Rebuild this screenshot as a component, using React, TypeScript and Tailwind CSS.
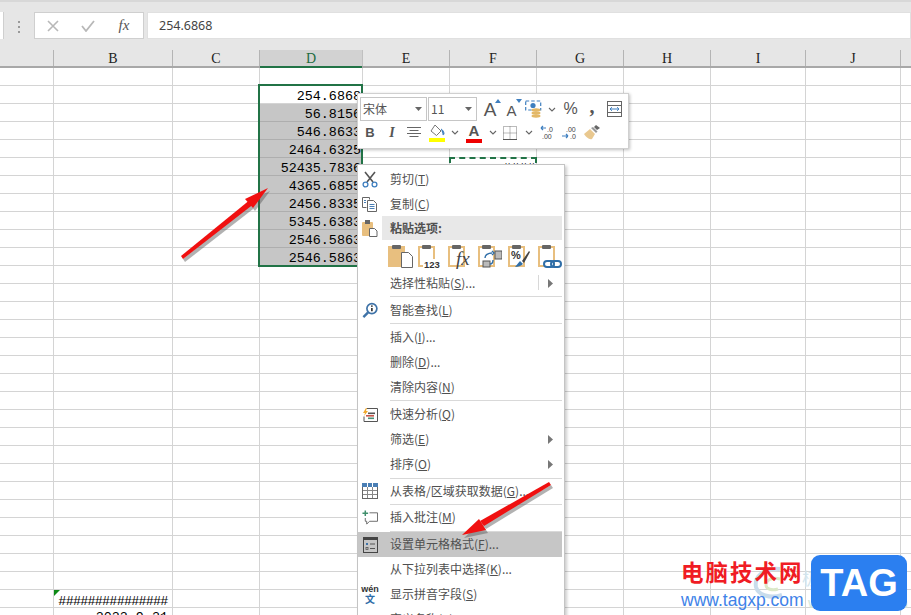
import React from "react";

const CJK = '"Noto Sans CJK SC","Noto Sans",sans-serif';
const colWidths = [54, 119, 87, 103, 87, 87, 87, 87, 95, 95, 20];
const colNames = ["", "B", "C", "D", "E", "F", "G", "H", "I", "J", ""];
const colClass = ["w-[54px]", "w-[119px]", "w-[87px]", "w-[103px]", "w-[87px]", "w-[87px]", "w-[87px]", "w-[87px]", "w-[95px]", "w-[95px]", "w-[20px]"];

const values: Record<number, string> = {
  1: "254.6868", 2: "56.8156", 3: "546.8633", 4: "2464.6325", 5: "52435.7836",
  6: "4365.6855", 7: "2456.8335", 8: "5345.6383", 9: "2546.5863", 10: "2546.5863",
};

function Cell({ col, row }: { col: number; row: number }) {
  const selected = col === 3 && row >= 2 && row <= 10;
  const base = `${colClass[col]} shrink-0 h-[18px] border-r border-b relative font-['Liberation_Mono'] text-[13.4px] text-black overflow-visible whitespace-nowrap`;
  const tone = selected ? "bg-[#c6c6c6] border-[#aeaeae]" : "border-[#d4d4d4]";
  let text: string | null = null;
  let align = "text-right pr-[1px] leading-[21px]";
  if (col === 3 && values[row]) text = values[row];
  if (col === 5 && row === 5) text = "####";
  if (col === 1 && row === 29) { text = "###############"; align = "text-center tracking-[-0.75px] leading-[23px]"; }
  if (col === 1 && row === 30) { text = "2022-9-21"; align = "text-right pr-[4px] leading-[20px]"; }
  return (
    <div className={`${base} ${tone} ${align}`}>
      {text}
      {col === 1 && row === 29 && (
        <div className="absolute left-0 top-0 w-0 h-0 border-t-[6px] border-r-[6px] border-t-[#0e8a16] border-r-transparent" />
      )}
    </div>
  );
}

function Chevron({ color = "#666" }: { color?: string }) {
  return (
    <svg width="8" height="5" viewBox="0 0 8 5"><path d="M1 1l3 3 3-3" fill="none" stroke={color} strokeWidth="1.1" /></svg>
  );
}
function Caret() {
  return <svg width="7" height="4" viewBox="0 0 7 4"><path d="M0 0h7L3.5 4z" fill="#666" /></svg>;
}
function SubArrow() {
  return <svg width="5" height="9" viewBox="0 0 5 9"><path d="M0 0l5 4.5L0 9z" fill="#777" /></svg>;
}

function Scissors() {
  return (
    <svg width="16" height="17" viewBox="0 0 16 17" fill="none">
      <path d="M3 1l8 10M13 1L5 11" stroke="#555" strokeWidth="1.6" />
      <circle cx="3.5" cy="13.5" r="2.4" stroke="#3f7fbf" strokeWidth="1.3" />
      <circle cx="12.5" cy="13.5" r="2.4" stroke="#3f7fbf" strokeWidth="1.3" />
    </svg>
  );
}
function CopyIcon() {
  return (
    <svg width="16" height="15" viewBox="0 0 16 15" fill="none" stroke="#666">
      <path d="M.5.5h7v2M.5.5v10h4" />
      <path d="M5.5 3.5h6l3 3v8h-9z" fill="#fff" />
      <path d="M7.5 7.5h5M7.5 9.5h5M7.5 11.5h5M2 3.5h2M2 5.5h2" stroke="#4a7fb5" />
    </svg>
  );
}
function PasteMain() {
  return (
    <svg width="16" height="18" viewBox="0 0 16 18">
      <rect x="0" y="3" width="11" height="14" rx="1" fill="#e8bf7f" />
      <rect x="3" y="1" width="5" height="4" fill="#666" />
      <path d="M7.5 9.5h5l2.5 2.5v5.5H7.5z" fill="#fff" stroke="#666" />
    </svg>
  );
}
function InfoSearch() {
  return (
    <svg width="17" height="17" viewBox="0 0 17 17" fill="none">
      <circle cx="10.5" cy="6.5" r="5.3" stroke="#3f73a8" strokeWidth="1.8" />
      <path d="M6.5 10.5L1.5 15.5" stroke="#3f73a8" strokeWidth="2.6" />
      <path d="M10.5 5.8v3.4" stroke="#333" strokeWidth="1.8" />
      <circle cx="10.5" cy="3.8" r="1" fill="#333" />
    </svg>
  );
}
function QuickAnalysis() {
  return (
    <svg width="16" height="15" viewBox="0 0 16 15">
      <path d="M5 1.5h10.5v13H2v-5" fill="#fff" stroke="#555" />
      <path d="M4 1L1 6h2L2 9l4-5H4l1-3z" fill="#f0a92e" />
      <rect x="6" y="5.5" width="7" height="1.6" fill="#555" />
      <rect x="4" y="8" width="8" height="1.6" fill="#c9554a" />
      <rect x="6" y="10.5" width="6" height="1.6" fill="#4a8f78" />
    </svg>
  );
}
function TableIcon() {
  return (
    <svg width="16" height="16" viewBox="0 0 16 16" fill="none">
      <rect x=".5" y=".5" width="15" height="15" fill="#fff" stroke="#666" />
      <rect x="0" y="0" width="16" height="4" fill="#4a7fb5" />
      <path d="M5.5 4v11M10.5 4v11M1 7.5h14M1 11.5h14" stroke="#888" />
      <path d="M5.5 0v4M10.5 0v4" stroke="#fff" />
    </svg>
  );
}
function CommentAdd() {
  return (
    <svg width="17" height="16" viewBox="0 0 17 16" fill="none">
      <path d="M8 2.500h8.500v9H8l-3 3v-3H3.500V8" stroke="#666" />
      <path d="M3.500 0v6M.5 3h6" stroke="#3f8f6c" strokeWidth="1.6" />
    </svg>
  );
}
function FormatCells() {
  return (
    <svg width="15" height="16" viewBox="0 0 15 16" fill="none">
      <rect x=".5" y=".5" width="14" height="15" stroke="#444" />
      <rect x="0" y="0" width="15" height="3" fill="#444" />
      <path d="M3 6h2v2H3z" fill="#3f73a8" />
      <path d="M7 7h5M7 11.5h5" stroke="#555" />
      <rect x="3" y="10.5" width="2" height="2" stroke="#555" strokeWidth=".8" />
    </svg>
  );
}
function Wen() {
  return (
    <div className="flex flex-col items-center leading-none">
      <span className="font-['Liberation_Sans'] text-[9px] font-bold text-[#333] leading-[9px]">wén</span>
      <span className="text-[10px] text-[#2f6ea8] font-bold leading-[10px]" style={{ fontFamily: CJK }}>文</span>
    </div>
  );
}

function PasteBoard({ children, white }: { children?: React.ReactNode; white?: boolean }) {
  return (
    <div className="relative w-[22px] h-[24px] shrink-0">
      <svg width="22" height="24" viewBox="0 0 22 24" className="absolute left-0 top-0">
        <path d="M1 3h15v19H1z" fill={white ? "#fff" : "#e8bf7f"} stroke="#e8bf7f" strokeWidth="2" />
        <rect x="4" y="1" width="9" height="4" rx="1" fill="#666" />
      </svg>
      {children}
    </div>
  );
}

function PasteRow() {
  return (
    <div className="h-[31px] flex items-center pl-[30px] gap-[8px]">
      <PasteBoard>
        <svg width="12" height="16" viewBox="0 0 12 16" className="absolute right-[-3px] bottom-[0px]"><path d="M.5.5h7l4 4v11H.5z" fill="#fff" stroke="#666" /></svg>
      </PasteBoard>
      <PasteBoard white>
        <span className="absolute left-[5px] bottom-[-2px] bg-white font-['Liberation_Sans'] text-[9.5px] font-bold leading-[11px] text-[#333] px-[1px]">123</span>
      </PasteBoard>
      <PasteBoard white>
        <span className="absolute left-[8px] bottom-[-1px] font-['Liberation_Serif'] italic text-[19px] leading-[21px] text-[#444]">fx</span>
      </PasteBoard>
      <PasteBoard white>
        <svg width="22" height="18" viewBox="0 0 22 18" className="absolute left-[2px] top-[6px]">
          <rect x="15" y="1" width="7" height="8" fill="#bbb" stroke="#555" />
          <rect x="3" y="11" width="7" height="6" fill="#bbb" stroke="#555" />
          <path d="M5 8c0-3 3-5 7-5M12 1l2 2-2 2M13 10c0 2-1 4-3 4" fill="none" stroke="#2f6ea8" strokeWidth="1.4" />
        </svg>
      </PasteBoard>
      <PasteBoard white>
        <span className="absolute left-[3px] top-[6px] font-['Liberation_Sans'] font-bold text-[11px] leading-[11px] text-[#333]">%</span>
        <svg width="20" height="20" viewBox="0 0 20 20" className="absolute left-[4px] top-[5px]">
          <path d="M3 18l5-6 3 3c-2 2-5 3-8 3z" fill="#2f6ea8" />
          <path d="M10 12l7-10 1 1-6 11z" fill="#444" />
        </svg>
      </PasteBoard>
      <PasteBoard white>
        <svg width="20" height="10" viewBox="0 0 20 10" className="absolute left-[5px] bottom-[-1px]" fill="none" stroke="#2f6ea8" strokeWidth="2">
          <rect x="1" y="2" width="10" height="6" rx="3" fill="#fff" />
          <rect x="8" y="2" width="10" height="6" rx="3" />
        </svg>
      </PasteBoard>
    </div>
  );
}

type Item = { t?: string; k?: string; after?: string; icon?: React.ReactNode; sub?: boolean; h: number; hi?: boolean; split?: boolean };

function MenuRow({ t, k, after, icon, sub, h, hi, split }: Item) {
  const hClass = h === 24 ? "h-[24px]" : "h-[25px]";
  return (
    <div className={`${hClass} mr-[2px] flex items-center relative ${hi ? "bg-[#c6c6c6]" : ""}`}>
      <div className="w-[16px] ml-[4px] shrink-0 flex items-center justify-center">{icon}</div>
      <div className="pl-[12px] pb-[1px] text-[12px] leading-none text-[#505050] whitespace-nowrap" style={{ fontFamily: CJK }}>
        {t}(<span className="underline">{k}</span>){after}
      </div>
      {sub && <div className="absolute right-[9px] top-[8px]"><SubArrow /></div>}
      {split && <div className="absolute right-[23px] top-[4px] h-[15px] w-px bg-[#d8d8d8]" />}
    </div>
  );
}

function Sep({ h = 3 }: { h?: number }) {
  const c = h === 2 ? "h-[2px]" : "h-[3px]";
  return (
    <div className={`${c} flex items-center pl-[32px] pr-[2px]`}>
      <div className="w-full h-px bg-[#d9d9d9]" />
    </div>
  );
}

function ContextMenu() {
  return (
    <div className="absolute left-[357px] top-[164px] w-[208px] h-[470px] bg-white border border-[#c4c4c4] shadow-[2px_2px_3px_rgba(0,0,0,0.2)] pt-[2px]">
      <MenuRow t="剪切" k="T" icon={<Scissors />} h={25} />
      <MenuRow t="复制" k="C" icon={<CopyIcon />} h={24} />
      <div className="h-[24px] flex items-center relative">
        <div className="w-[24px] flex justify-center shrink-0"><PasteMain /></div>
        <div className="flex-1 h-full mr-[2px] bg-[#e8e8e8] flex items-center pl-[8px] pb-[1px] text-[12px] font-bold text-[#505050]" style={{ fontFamily: CJK }}>粘贴选项:</div>
      </div>
      <PasteRow />
      <MenuRow t="选择性粘贴" k="S" after="..." sub split h={24} />
      <Sep />
      <MenuRow t="智能查找" k="L" icon={<InfoSearch />} h={24} />
      <Sep />
      <MenuRow t="插入" k="I" after="..." h={25} />
      <MenuRow t="删除" k="D" after="..." h={25} />
      <MenuRow t="清除内容" k="N" h={24} />
      <Sep />
      <MenuRow t="快速分析" k="Q" icon={<QuickAnalysis />} h={25} />
      <MenuRow t="筛选" k="E" sub h={25} />
      <MenuRow t="排序" k="O" sub h={25} />
      <Sep h={2} />
      <MenuRow t="从表格/区域获取数据" k="G" after="..." icon={<TableIcon />} h={24} />
      <Sep h={2} />
      <MenuRow t="插入批注" k="M" icon={<CommentAdd />} h={25} />
      <Sep h={2} />
      <MenuRow t="设置单元格格式" k="F" after="..." icon={<FormatCells />} h={25} hi />
      <MenuRow t="从下拉列表中选择" k="K" after="..." h={25} />
      <MenuRow t="显示拼音字段" k="S" icon={<Wen />} h={25} />
      <MenuRow t="定义名称" k="A" after="..." h={25} />
    </div>
  );
}

function Combo({ text, w }: { text: string; w: string }) {
  return (
    <div className={`${w} h-[24px] border border-[#c6c6c6] flex items-center justify-between pl-[2px] pr-[4px] mr-px`}>
      <span className="text-[12px] text-[#555]" style={{ fontFamily: CJK }}>{text}</span>
      <Caret />
    </div>
  );
}

function MiniToolbar() {
  return (
    <div className="absolute left-[357px] top-[93px] w-[272px] h-[56px] bg-white border border-[#d0d0d0] shadow-[1px_1px_3px_rgba(0,0,0,0.25)] pl-[2px] pt-[3px]">
      <div className="flex items-center h-[24px]">
        <Combo text="宋体" w="w-[67px]" />
        <Combo text="11" w="w-[49px]" />
        <div className="w-[22px] ml-px relative flex justify-center items-end h-[20px]">
          <span className="font-['Liberation_Sans'] text-[19px] leading-[19px] text-[#555]">A</span>
          <svg width="6" height="4" viewBox="0 0 6 4" className="absolute right-[0px] top-[0px]"><path d="M0 4l3-4 3 4z" fill="#3f7fbf" /></svg>
        </div>
        <div className="w-[21px] relative flex justify-center items-end h-[20px]">
          <span className="font-['Liberation_Sans'] text-[15px] leading-[17px] text-[#555]">A</span>
          <svg width="6" height="4" viewBox="0 0 6 4" className="absolute right-[0px] top-[0px]"><path d="M0 0l3 4 3-4z" fill="#3f7fbf" /></svg>
        </div>
        <div className="w-[22px] flex justify-center">
          <svg width="17" height="18" viewBox="0 0 17 18">
            <path d="M.7 1h15v9H.7z" fill="#fff" stroke="#3f7fbf" strokeWidth="1.2" strokeDasharray="3.5 2" />
            <circle cx="8" cy="5.500" r="2.600" fill="#3f7fbf" />
            <ellipse cx="11" cy="10" rx="4.500" ry="1.700" fill="#e3b867" />
            <ellipse cx="11" cy="13" rx="4.500" ry="1.700" fill="#e3b867" />
            <ellipse cx="11" cy="16" rx="4.500" ry="1.700" fill="#e3b867" />
          </svg>
        </div>
        <div className="w-[15px] flex justify-center"><Chevron /></div>
        <div className="w-[23px] text-center font-['Liberation_Sans'] text-[16px] text-[#555] leading-none">%</div>
        <div className="w-[20px] text-center font-['Liberation_Serif'] font-bold text-[20px] text-[#555] leading-[14px] pb-[6px]">,</div>
        <div className="w-[25px] flex justify-center">
          <svg width="15" height="16" viewBox="0 0 15 16" fill="none">
            <rect x=".5" y=".5" width="14" height="15" stroke="#666" />
            <path d="M0 4.500h15M0 11.500h15" stroke="#666" />
            <path d="M3 8h9M3 8l2-1.800M3 8l2 1.800M12 8l-2-1.800M12 8l-2 1.800" stroke="#3f7fbf" />
          </svg>
        </div>
      </div>
      <div className="flex items-center h-[23px] -ml-px">
        <div className="w-[22px] text-center font-['Liberation_Sans'] font-bold text-[13px] text-[#555]">B</div>
        <div className="w-[22px] text-center font-['Liberation_Serif'] font-bold italic text-[14px] text-[#555]">I</div>
        <div className="w-[22px] flex justify-center">
          <svg width="14" height="11" viewBox="0 0 14 11"><path d="M0 .5h14M2.500 3.500h9M0 6.500h14M2.500 9.500h9" stroke="#666" /></svg>
        </div>
        <div className="w-[23px] flex justify-center">
          <svg width="16" height="18" viewBox="0 0 16 18">
            <path d="M6 1l6 6-4.500 4.500L2 7z" fill="#fff" stroke="#777" />
            <path d="M12 5c2 1 3 3 3 5 0 .8-1.400.8-1.400 0" fill="#3f7fbf" stroke="#3f7fbf" />
            <rect x="0" y="14" width="16" height="4" fill="#ffff00" />
          </svg>
        </div>
        <div className="w-[14px] flex justify-center"><Chevron /></div>
        <div className="w-[24px] flex flex-col items-center h-[20px] relative">
          <span className="font-['Liberation_Sans'] font-bold text-[15px] leading-[15px] text-[#555]">A</span>
          <div className="absolute bottom-[0px] w-[16px] h-[4px] bg-[#ee0000]" />
        </div>
        <div className="w-[13px] flex justify-center"><Chevron /></div>
        <div className="w-[22px] flex justify-center">
          <svg width="14" height="14" viewBox="0 0 14 14" fill="none">
            <path d="M.5.500h13v13H.5zM7 .5v13M.5 7h13" stroke="#777" strokeDasharray="1 1" />
            <path d="M0 13.500h14" stroke="#555" />
          </svg>
        </div>
        <div className="w-[16px] flex justify-center"><Chevron /></div>
        <div className="w-[21px] flex justify-center">
          <svg width="15" height="15" viewBox="0 0 15 15">
            <path d="M6 3H1M1 3l2-2M1 3l2 2" fill="none" stroke="#3f7fbf" strokeWidth="1.200" />
            <text x="7" y="6.500" fontSize="7" fontFamily="Liberation Sans" fill="#444">.0</text>
            <text x="2" y="14" fontSize="7" fontFamily="Liberation Sans" fill="#444">.00</text>
          </svg>
        </div>
        <div className="w-[22px] flex justify-center">
          <svg width="15" height="15" viewBox="0 0 15 15">
            <text x="4" y="6.500" fontSize="7" fontFamily="Liberation Sans" fill="#444">.00</text>
            <path d="M0 11h6M6 11L4 9M6 11l-2 2" fill="none" stroke="#3f7fbf" strokeWidth="1.200" />
            <text x="8" y="14" fontSize="7" fontFamily="Liberation Sans" fill="#444">.0</text>
          </svg>
        </div>
        <div className="w-[24px] flex justify-center">
          <svg width="17" height="15" viewBox="0 0 17 15">
            <path d="M0 9l6-5 5 5-3 5C5 15 2 12 0 9z" fill="#e9c88f" />
            <path d="M7 3l5 5 1.500-1.500L9 2z" fill="#999" />
            <path d="M10 2l2-2 4 3-3 2z" fill="#666" />
          </svg>
        </div>
      </div>
    </div>
  );
}

function Arrow({ shaft, head, className }: { shaft: string; head: string; className: string }) {
  return (
    <svg className={className} width="911" height="615" viewBox="0 0 911 615">
      <g fill="#555" opacity="0.45" transform="translate(2 3)">
        <polygon points={shaft} />
        <polygon points={head} />
      </g>
      <polygon points={shaft} fill="#f01010" />
      <polygon points={head} fill="#f01010" />
    </svg>
  );
}

export default function App() {
  return (
    <div className="relative w-[911px] h-[615px] overflow-hidden bg-white" style={{ fontFamily: CJK }}>
      <div className="h-[50px] bg-[#e6e6e6] border-t-2 border-[#d8d8d8] flex items-start pt-[10px] shrink-0">
        <div className="w-[4px] h-[27px] bg-white border-r border-[#cfcfcf]" />
        <div className="w-[30px] flex flex-col items-center gap-[3px] pt-[9px]">
          <div className="w-[2px] h-[2px] bg-[#999]" />
          <div className="w-[2px] h-[2px] bg-[#999]" />
          <div className="w-[2px] h-[2px] bg-[#999]" />
        </div>
        <div className="w-[110px] h-[27px] bg-white border border-[#cfcfcf] flex items-center">
          <div className="w-[36px] flex justify-center">
            <svg width="12" height="12" viewBox="0 0 12 12"><path d="M1 1l10 10M11 1L1 11" stroke="#b8b8b8" strokeWidth="1.600" /></svg>
          </div>
          <div className="w-[34px] flex justify-center">
            <svg width="14" height="12" viewBox="0 0 14 12"><path d="M1 6l4 5 8-10" fill="none" stroke="#b8b8b8" strokeWidth="1.800" /></svg>
          </div>
          <div className="w-[38px] text-center font-['Liberation_Serif'] italic text-[15px] text-[#555] leading-none">fx</div>
        </div>
        <div className="ml-[3px] flex-1 h-[27px] bg-white border border-[#e0e0e0] flex items-center pl-[11px] pt-[1px] font-['Noto_Sans'] text-[12.500px] text-[#444]">254.6868</div>
      </div>

      <div className="flex h-[18px] bg-[#e6e6e6] border-b-2 border-[#a8a8a8]">
        {colNames.map((n, i) => (
          <div
            key={i}
            className={`${colClass[i]} shrink-0 relative flex items-center justify-center pt-[2px] font-['Liberation_Serif'] text-[14px] leading-none border-r ${
              i === 3 ? "bg-[#d2d2d2] text-[#1e6b40] border-[#c0c0c0]" : "text-[#222] border-[#b4b4b4]"
            }`}
          >
            {n}
            {i === 3 && <div className="absolute left-0 right-0 bottom-[-2px] h-[2px] bg-[#217346]" />}
          </div>
        ))}
      </div>

      <div className="flex flex-col">
        {Array.from({ length: 31 }, (_, r) => (
          <div key={r} className="flex">
            {colWidths.map((_, c) => (
              <Cell key={c} col={c} row={r} />
            ))}
          </div>
        ))}
      </div>

      <div className="absolute left-[258px] top-[84px] w-[105px] h-[183px] border-2 border-[#217346] pointer-events-none" />
      <div className="absolute left-[449px] top-[157px] w-[88px] h-[20px] border-2 border-dashed border-[#217346]" />

      <ContextMenu />
      <MiniToolbar />

      <Arrow
        className="absolute left-0 top-0"
        shaft="181,256 183,259 255,203 251,199"
        head="268,188 245,199 253,208"
      />
      <Arrow
        className="absolute left-0 top-0"
        shaft="549,482 551,485 484,526 480,521"
        head="462,535 479,519 486,530"
      />

      <div className="absolute left-[802px] top-[565px] text-[17px] text-[#d3e4ec] whitespace-nowrap">极光下载站</div>
      <div className="absolute left-[808px] top-[592px] font-['Liberation_Sans'] text-[15px] text-[#d5e8d8] whitespace-nowrap">www.xz27.com</div>
      <svg className="absolute left-[750px] top-[565px]" width="40" height="38" viewBox="0 0 40 38" fill="none">
        <path d="M30 4C14 2 4 12 6 22c2 8 14 12 26 8" stroke="#c8dcec" strokeWidth="4" />
        <path d="M30 14c-8-2-14 1-14 6 0 4 6 6 12 4" stroke="#dbe8c8" strokeWidth="3" />
      </svg>
      <div className="absolute left-[681px] top-[557px] text-[22.500px] leading-[28px] font-bold text-[#f01c24] whitespace-nowrap tracking-[2px]">电脑技术网</div>
      <div className="absolute left-[681px] top-[590px] font-['Liberation_Sans'] text-[17.500px] leading-[20px] text-[#3f83e8] whitespace-nowrap">www.tagxp.com</div>
      <div className="absolute left-[811px] top-[555px] w-[96px] h-[56px] rounded-[9px] bg-[#2b7ff0] flex items-center justify-center font-['Liberation_Sans'] font-bold text-[38px] leading-none text-white">TAG</div>
    </div>
  );
}
